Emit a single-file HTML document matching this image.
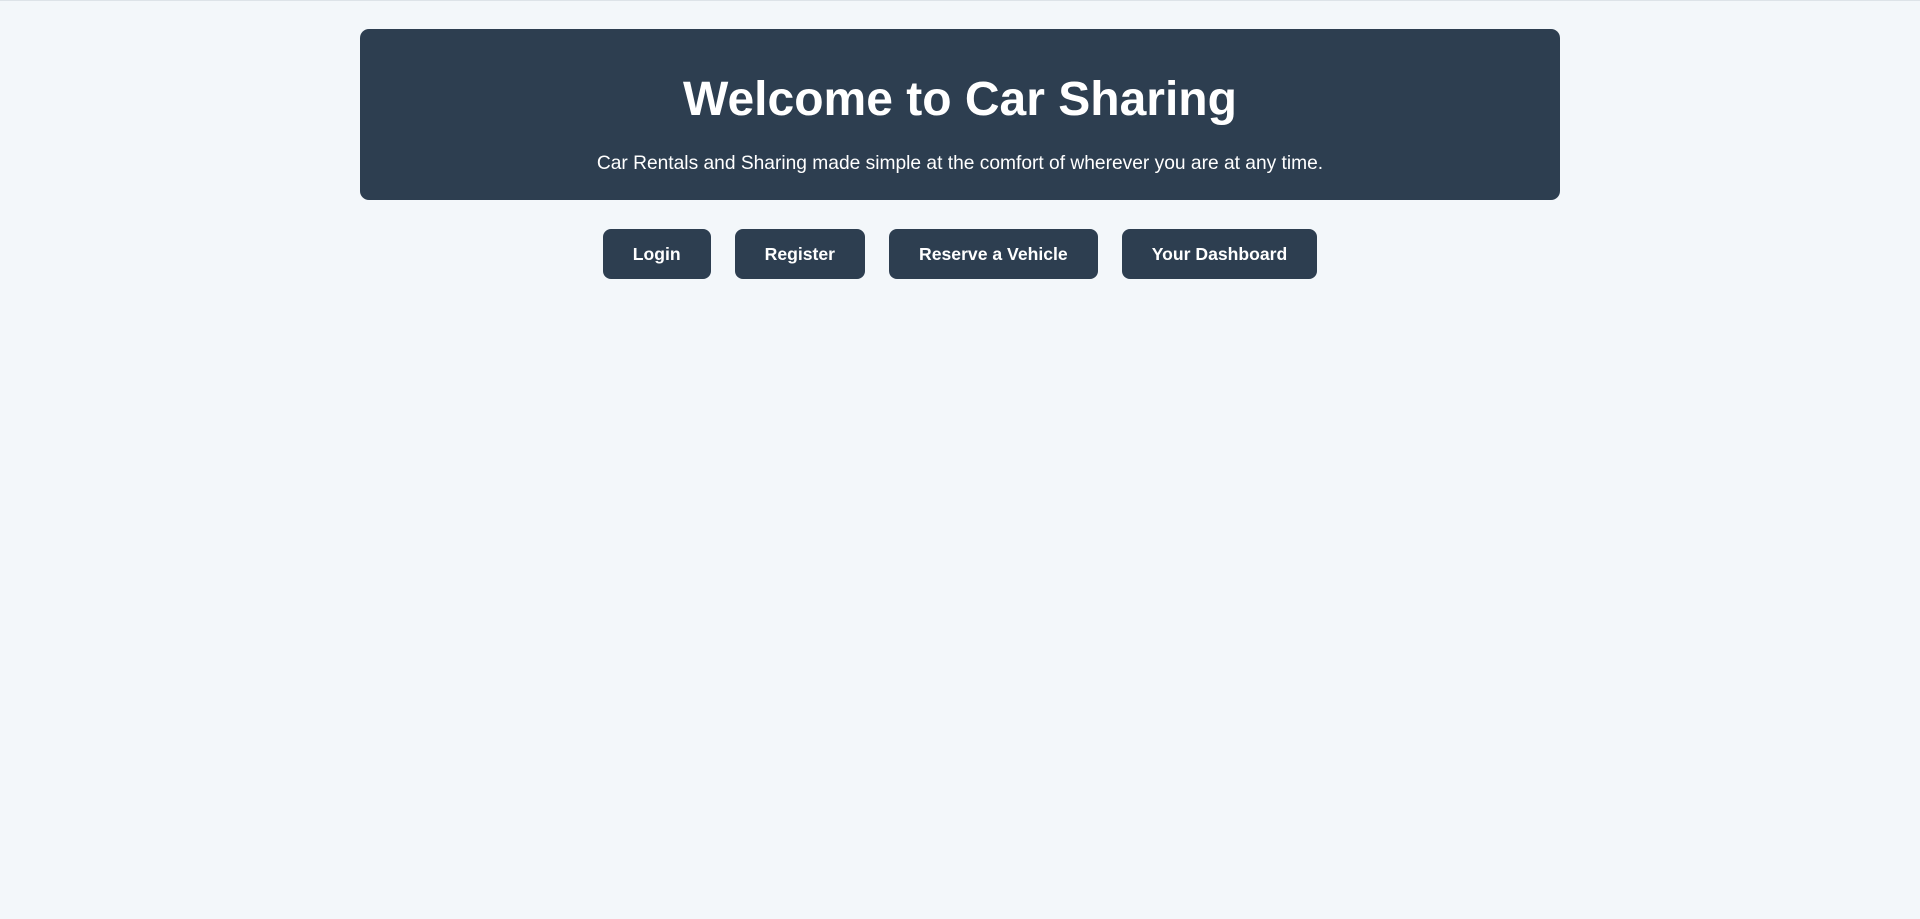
<!DOCTYPE html>
<html><head><style>
body{margin:0;background:#f3f7fa;font-family:"Liberation Sans",Arial,sans-serif;border-top:1px solid #dde3e8;}
.hdr{position:absolute;left:360px;top:29px;width:1200px;height:171px;background:#2d3e50;border-radius:9px;color:#fff;text-align:center;}
h1{margin:0;position:absolute;top:43px;left:0;right:0;font-size:48px;line-height:56px;font-weight:bold;}
p{margin:0;position:absolute;top:123px;left:0;right:0;font-size:19.2px;line-height:24px;}
.btns{position:absolute;top:229px;left:0;width:1920px;text-align:center;font-size:0;}
.b{display:inline-block;height:50px;line-height:50px;background:#2d3e50;color:#fff;font-size:17.6px;font-weight:bold;border-radius:8px;margin:0 12px;padding:0 30px;}
</style></head><body>
<div class="hdr"><h1>Welcome to Car Sharing</h1><p>Car Rentals and Sharing made simple at the comfort of wherever you are at any time.</p></div>
<div class="btns"><span class="b">Login</span><span class="b">Register</span><span class="b">Reserve a Vehicle</span><span class="b">Your Dashboard</span></div>
</body></html>
